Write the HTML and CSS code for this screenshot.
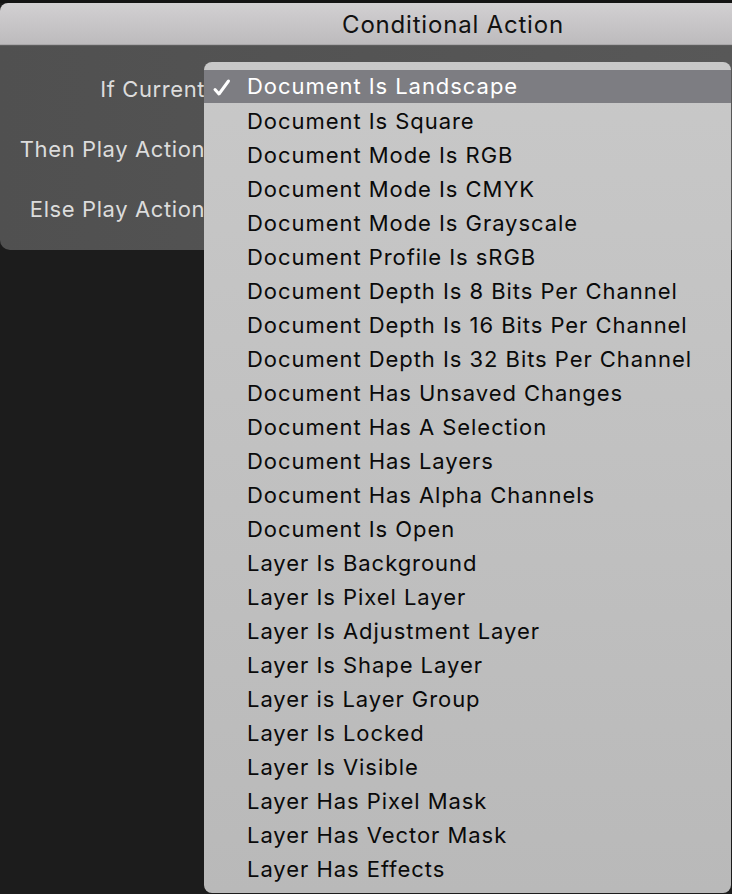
FILE: index.html
```html
<!DOCTYPE html>
<html>
<head>
<meta charset="utf-8">
<link rel="stylesheet" href="styles.css">
</head>
<body>
<div class="screen">
  <div class="topstrip"></div>
  <div class="titlebar">Conditional Action</div>
  <div class="dialog">
    <div class="form">
      <div class="label l1">If Current:</div>
      <div class="label l2">Then Play Action:</div>
      <div class="label l3">Else Play Action:</div>
    </div>
  </div>
  <ul class="menu">
    <li class="item selected"><svg class="check" width="20" height="20" viewBox="0 0 20 20"><path d="M3 11.5 L7 16 L16.5 3" fill="none" stroke="#fff" stroke-width="3" stroke-linecap="round" stroke-linejoin="round"/></svg>Document Is Landscape</li>
    <li class="item">Document Is Square</li>
    <li class="item">Document Mode Is RGB</li>
    <li class="item">Document Mode Is CMYK</li>
    <li class="item">Document Mode Is Grayscale</li>
    <li class="item">Document Profile Is sRGB</li>
    <li class="item">Document Depth Is 8 Bits Per Channel</li>
    <li class="item">Document Depth Is 16 Bits Per Channel</li>
    <li class="item">Document Depth Is 32 Bits Per Channel</li>
    <li class="item">Document Has Unsaved Changes</li>
    <li class="item">Document Has A Selection</li>
    <li class="item">Document Has Layers</li>
    <li class="item">Document Has Alpha Channels</li>
    <li class="item">Document Is Open</li>
    <li class="item">Layer Is Background</li>
    <li class="item">Layer Is Pixel Layer</li>
    <li class="item">Layer Is Adjustment Layer</li>
    <li class="item">Layer Is Shape Layer</li>
    <li class="item">Layer is Layer Group</li>
    <li class="item">Layer Is Locked</li>
    <li class="item">Layer Is Visible</li>
    <li class="item">Layer Has Pixel Mask</li>
    <li class="item">Layer Has Vector Mask</li>
    <li class="item">Layer Has Effects</li>
  </ul>
</div>
</body>
</html>
```

FILE: styles.css
```css
html, body {
  margin: 0;
  padding: 0;
  background: #1c1c1c;
}
.screen {
  position: relative;
  width: 732px;
  height: 894px;
  overflow: hidden;
  font-family: Inter, "Liberation Sans", Arial, sans-serif;
}
.topstrip {
  height: 3px;
  background: #141414;
}
.titlebar {
  height: 42px;
  box-sizing: border-box;
  border-bottom: 1px solid #a9a7a9;
  background: linear-gradient(#d2d0d2, #bdbbbd);
  border-radius: 8px 0 0 0;
  color: #111;
  font-size: 24px;
  letter-spacing: 0.8px;
  line-height: 43px;
  text-align: center;
  padding-left: 174px;
}
.dialog {
  height: 204px;
  background: linear-gradient(90deg, #505050, #585858);
  border-top: 1px solid #5e5e5e;
  border-radius: 0 0 0 10px;
}
.form {
  width: 212px;
  padding-top: 26px;
  display: flex;
  flex-direction: column;
}
.label {
  height: 60px;
  text-align: right;
  color: #dcdcdc;
  font-size: 22px;
  letter-spacing: 0.6px;
  line-height: 34px;
  white-space: nowrap;
}
.menu {
  position: absolute;
  left: 204px;
  top: 62px;
  width: 527px;
  height: 831px;
  box-sizing: border-box;
  margin: 0;
  padding: 8px 0 7px;
  list-style: none;
  background: linear-gradient(#c8c8c8, #b9b9b9);
  border-radius: 8px;
}
.item {
  position: relative;
  height: 34px;
  line-height: 34px;
  padding-left: 43px;
  font-size: 22px;
  letter-spacing: 0.95px;
  color: #0a0a0a;
  white-space: nowrap;
}
.item.selected {
  background: #7d7d82;
  color: #ffffff;
  height: 33px;
  line-height: 33px;
  margin-bottom: 1px;
}
.check {
  position: absolute;
  left: 8px;
  top: 8px;
}
```
